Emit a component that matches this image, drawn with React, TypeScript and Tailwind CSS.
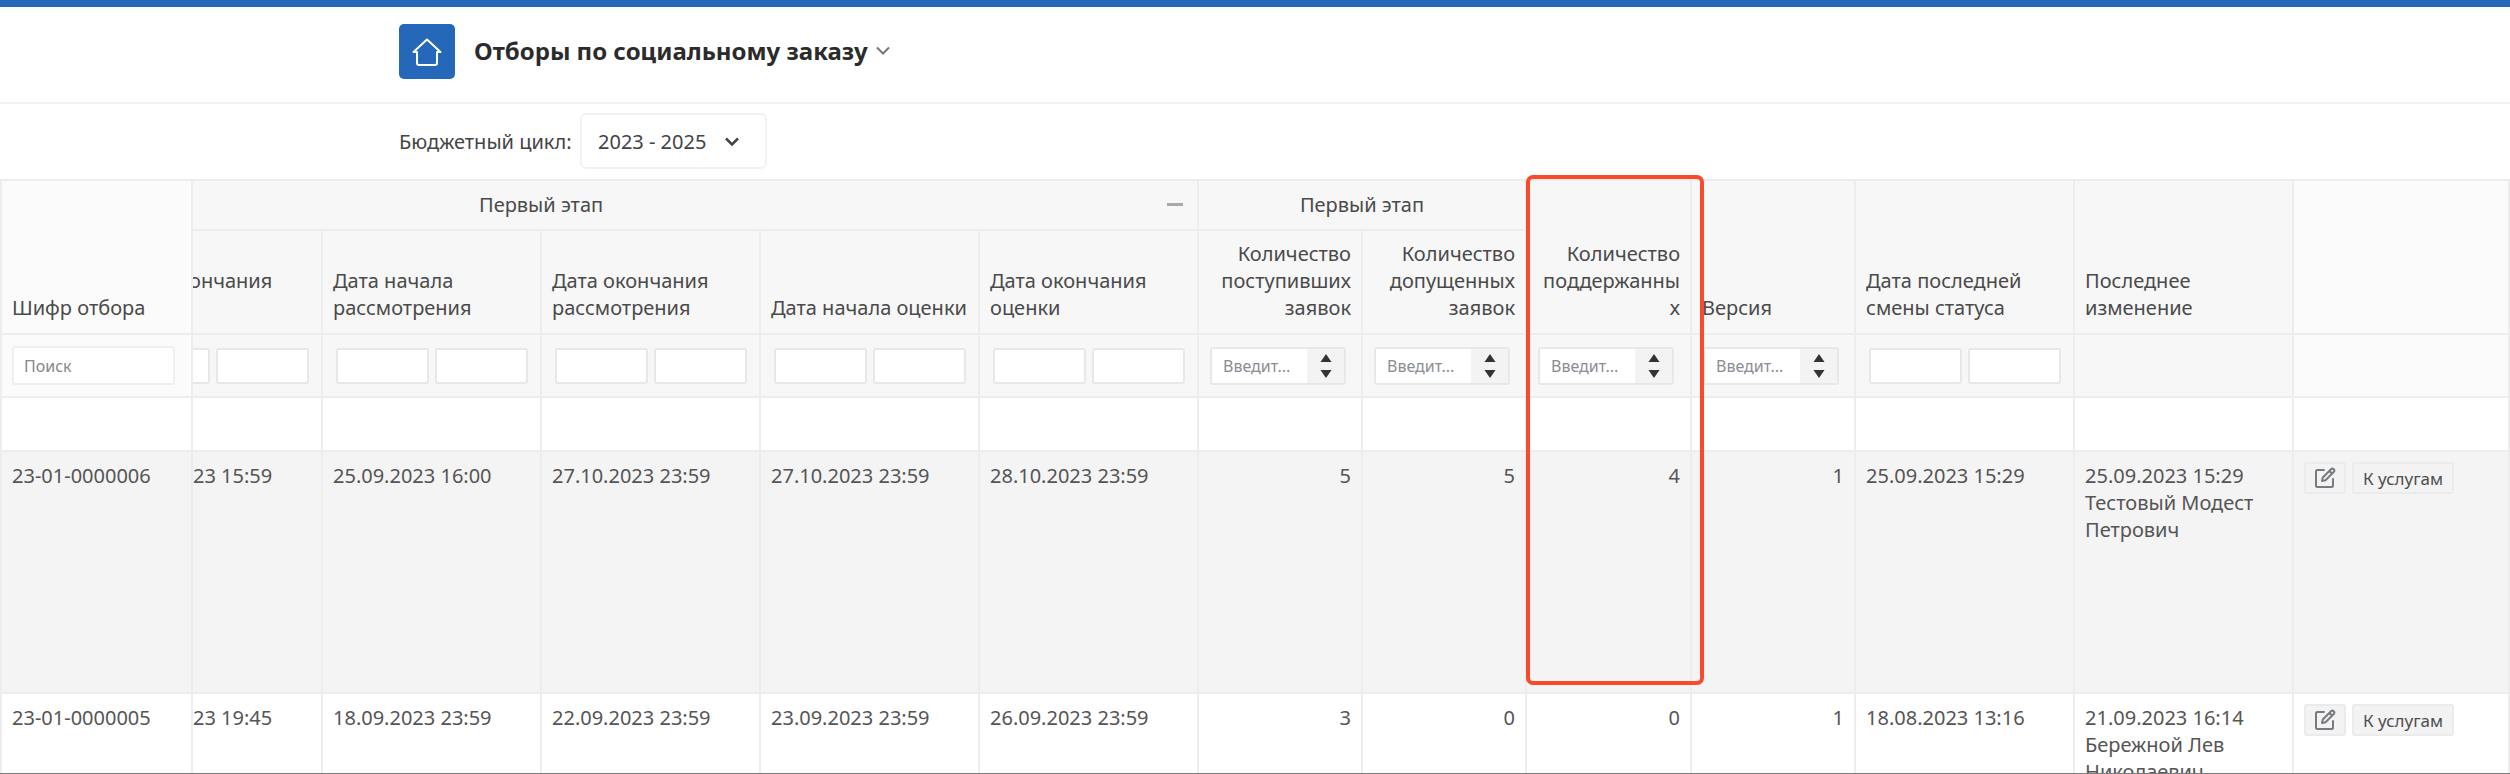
import React from "react";

const cell = "border-r-2 border-b-2 border-[#ededed]";
const head = cell + " bg-[#f7f7f7] px-[10px] pb-3 align-bottom font-normal text-[#4a4a4a]";
const filter = cell + " bg-[#f7f7f7] align-middle";
const dateInput = "h-9 w-[93px] shrink-0 rounded-[3px] border-2 border-[#e8e8e8] bg-white px-2 text-base outline-none";

function DateRange({ label }: { label: string }) {
  return (
    <div className="flex justify-end gap-[6px] overflow-hidden pr-3">
      <input className={dateInput} aria-label={`${label}: с`} />
      <input className={dateInput} aria-label={`${label}: по`} />
    </div>
  );
}

function NumberFilter({ label }: { label: string }) {
  return (
    <div className="ml-[11px] flex h-[38px] w-[136px] overflow-hidden rounded-[3px] border-2 border-[#e8e8e8] bg-white">
      <input
        aria-label={label}
        placeholder="Введит..."
        className="w-[95px] min-w-0 pl-[11px] text-base text-[#4a4a4a] outline-none placeholder:text-[#8b8d94]"
      />
      <button aria-label={`${label}: изменить`} className="flex flex-1 items-center justify-center bg-[#f3f3f3]">
        <svg width="12" height="24" viewBox="0 0 12 24" fill="#333">
          <path d="M6 0 11.500 8H0.500ZM6 24 0.500 16H11.500Z" />
        </svg>
      </button>
    </div>
  );
}

function EditIcon() {
  return (
    <svg width="22" height="22" viewBox="0 0 22 22" fill="none" stroke="#777b80" strokeWidth="2" strokeLinejoin="round" strokeLinecap="round">
      <path d="M10 3H3.5A1.5 1.5 0 0 0 2 4.500V18.500A1.500 1.500 0 0 0 3.500 20H17.500A1.500 1.500 0 0 0 19 18.500V12" />
      <path d="M8 14 8.800 10.500 17 2.300A1.700 1.700 0 0 1 19.700 5L11.500 13.200ZM15.500 4 18 6.500" />
    </svg>
  );
}

const rows = [
  {
    id: "23-01-0000006",
    dates: ["23 15:59", "25.09.2023 16:00", "27.10.2023 23:59", "27.10.2023 23:59", "28.10.2023 23:59"],
    nums: [5, 5, 4, 1],
    status: "25.09.2023 15:29",
    changed: ["25.09.2023 15:29", "Тестовый Модест", "Петрович"],
    bg: "bg-[#f4f4f4]",
  },
  {
    id: "23-01-0000005",
    dates: ["23 19:45", "18.09.2023 23:59", "22.09.2023 23:59", "23.09.2023 23:59", "26.09.2023 23:59"],
    nums: [3, 0, 0, 1],
    status: "18.08.2023 13:16",
    changed: ["21.09.2023 16:14", "Бережной Лев", "Николаевич"],
    bg: "bg-white",
  },
];

const td = cell + " px-[10px] pt-[10px] align-top";
const btn = "flex h-8 items-center justify-center rounded-[3px] border-2 border-[#ebebeb] bg-[#f3f3f3] text-[#4d4d4d]";

export default function App() {
  return (
    <div className="flex h-screen flex-col overflow-hidden border-b border-[#7c7c7c] bg-white font-['Noto_Sans',sans-serif] text-[20px] leading-[27px] text-[#555]">
      <header className="flex h-[104px] shrink-0 items-start border-t-[7px] border-b-2 border-t-[#2567b9] border-b-[#f1f1f1] pt-[17px] pl-[399px]">
        <a href="#home" aria-label="Главная" className="flex h-[55px] w-14 items-center justify-center rounded-[5px] bg-[#2567b9]">
          <svg width="30" height="30" viewBox="0 0 30 30" fill="none" stroke="#fff" strokeWidth="2" strokeLinejoin="round" strokeLinecap="round">
            <path d="M1.500 15 15 2.500 28.500 15H25V26A2 2 0 0 1 23 28H7A2 2 0 0 1 5 26V15Z" />
          </svg>
        </a>
        <button className="ml-[19px] flex h-[53px] items-center gap-2 text-[#2b2b2b]">
          <h1 className="text-[24px] leading-8 font-bold">Отборы по социальному заказу</h1>
          <svg width="14" height="9" viewBox="0 0 14 9" fill="none" stroke="#777" strokeWidth="2">
            <path d="M1 1.500 7 7.500 13 1.500" />
          </svg>
        </button>
      </header>

      <div className="flex h-[75px] shrink-0 items-start gap-[10px] pt-[9px] pl-[399px]">
        <label htmlFor="cycle" className="flex h-14 w-[171px] items-center whitespace-nowrap text-[#444]">
          Бюджетный цикл:
        </label>
        <div className="relative">
          <select id="cycle" className="h-14 w-[187px] appearance-none rounded-md border-2 border-[#f1f2f5] bg-white pl-4 text-[20px] text-[#444] outline-none">
            <option>2023 - 2025</option>
          </select>
          <svg className="pointer-events-none absolute top-6 right-7" width="14" height="10" viewBox="0 0 14 10" fill="none" stroke="#444" strokeWidth="2.500">
            <path d="M1 1.500 7 7.500 13 1.500" />
          </svg>
        </div>
      </div>

      <div className="border-t-2 border-l-2 border-[#ededed]">
        <table className="w-full table-fixed border-separate border-spacing-0 text-left">
          <colgroup>
            <col className="w-[191px]" />
            <col className="w-[130px]" />
            <col className="w-[219px]" />
            <col className="w-[219px]" />
            <col className="w-[219px]" />
            <col className="w-[219px]" />
            <col className="w-[164px]" />
            <col className="w-[164px]" />
            <col className="w-[165px]" />
            <col className="w-[164px]" />
            <col className="w-[219px]" />
            <col className="w-[219px]" />
            <col />
          </colgroup>
          <thead>
            <tr className="h-[50px]">
              <th rowSpan={2} className={cell + " bg-[#fbfbfb] px-[10px] pb-3 align-bottom font-normal text-[#4a4a4a]"}>Шифр отбора</th>
              <th colSpan={5} className={cell + " bg-[#f7f7f7] pb-[2px] align-middle font-normal text-[#4a4a4a]"}>
                <div className="flex items-center justify-between pr-3 pl-[286px]">
                  Первый этап
                  <button aria-label="Свернуть" className="flex h-6 w-5 items-center justify-center">
                    <span className="h-[3px] w-4 bg-[#a9a9a9]" />
                  </button>
                </div>
              </th>
              <th colSpan={2} className={cell + " bg-[#f7f7f7] pb-[2px] text-center align-middle font-normal text-[#4a4a4a]"}>Первый этап</th>
              <th rowSpan={2} className={head + " relative text-right"}>
                Количество
                <br />
                поддержанны
                <br />х
                <span className="pointer-events-none absolute -top-[6px] -left-px z-10 h-[510px] w-[178px] rounded-[7px] border-4 border-[#f94b29]" />
              </th>
              <th rowSpan={2} className={head}>Версия</th>
              <th rowSpan={2} className={head}>Дата последней смены статуса</th>
              <th rowSpan={2} className={head}>
                Последнее
                <br />
                изменение
              </th>
              <td rowSpan={2} className={cell + " bg-[#fbfbfb]"} />
            </tr>
            <tr className="h-[104px]">
              <th className={cell + " bg-[#f7f7f7] pb-[39px] align-bottom font-normal text-[#4a4a4a]"}>
                <div className="overflow-hidden">
                  <div className="-ml-1">ончания</div>
                </div>
              </th>
              <th className={head}>
                Дата начала
                <br />
                рассмотрения
              </th>
              <th className={head}>
                Дата окончания
                <br />
                рассмотрения
              </th>
              <th className={head + " whitespace-nowrap"}>Дата начала оценки</th>
              <th className={head}>
                Дата окончания
                <br />
                оценки
              </th>
              <th className={head + " text-right"}>
                Количество
                <br />
                поступивших
                <br />
                заявок
              </th>
              <th className={head + " text-right"}>
                Количество
                <br />
                допущенных
                <br />
                заявок
              </th>
            </tr>
            <tr className="h-[63px]">
              <td className={cell + " bg-[#fbfbfb] pr-4 pl-[10px] align-middle"}>
                <input
                  aria-label="Шифр отбора"
                  placeholder="Поиск"
                  className="block h-[39px] w-full rounded-[3px] border-2 border-[#efefef] bg-white px-[10px] text-base outline-none placeholder:text-[#85878d]"
                />
              </td>
              <td className={filter}><DateRange label="Дата окончания" /></td>
              <td className={filter}><DateRange label="Дата начала рассмотрения" /></td>
              <td className={filter}><DateRange label="Дата окончания рассмотрения" /></td>
              <td className={filter}><DateRange label="Дата начала оценки" /></td>
              <td className={filter}><DateRange label="Дата окончания оценки" /></td>
              <td className={filter}><NumberFilter label="Количество поступивших" /></td>
              <td className={filter}><NumberFilter label="Количество допущенных" /></td>
              <td className={filter}><NumberFilter label="Количество поддержанных" /></td>
              <td className={filter}><NumberFilter label="Версия" /></td>
              <td className={filter}><DateRange label="Дата смены статуса" /></td>
              <td className={filter} />
              <td className={cell + " bg-[#fbfbfb]"} />
            </tr>
          </thead>
          <tbody>
            <tr className="h-[54px]">
              {Array.from({ length: 13 }, (_, i) => (
                <td key={i} className={cell} />
              ))}
            </tr>
            {rows.map((r) => (
              <tr key={r.id} className={"h-[242px] " + r.bg}>
                <td className={td}>{r.id}</td>
                {r.dates.map((d, i) => (
                  <td key={i} className={i === 0 ? cell + " pt-[10px] align-top" : td}>{d}</td>
                ))}
                {r.nums.map((n, i) => (
                  <td key={i} className={td + " text-right"}>{n}</td>
                ))}
                <td className={td}>{r.status}</td>
                <td className={td}>
                  {r.changed.map((line) => (
                    <div key={line}>{line}</div>
                  ))}
                </td>
                <td className={td}>
                  <div className="flex gap-[6px]">
                    <button aria-label="Редактировать" className={btn + " w-[42px]"}>
                      <EditIcon />
                    </button>
                    <button className={btn + " w-[102px] text-[17px]"}>К услугам</button>
                  </div>
                </td>
              </tr>
            ))}
          </tbody>
        </table>
      </div>
    </div>
  );
}
